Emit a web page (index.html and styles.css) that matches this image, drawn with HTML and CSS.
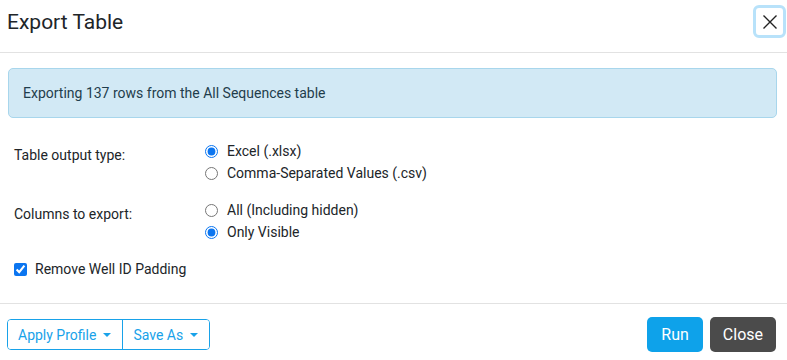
FILE: index.html
```html
<!DOCTYPE html>
<html lang="en">
<head>
  <meta charset="UTF-8">
  <meta name="viewport" content="width=device-width, initial-scale=1.0">
  <title>Export Table</title>
  <link rel="stylesheet" href="styles.css">
</head>
<body>
  <div class="modal">
    <div class="modal-header">
      <h1>Export Table</h1>
      <button class="close-btn" type="button" aria-label="Close">
        <svg width="16" height="16" viewBox="0 0 16 16"><path d="M1.5 1.5 L14.5 14.5 M14.5 1.5 L1.5 14.5" stroke="#222" stroke-width="1.4" fill="none"/></svg>
      </button>
    </div>
    <div class="modal-body">
      <div class="alert">Exporting 137 rows from the All Sequences table</div>
      <form class="export-form">
        <div class="form-row">
          <div class="row-label">Table output type:</div>
          <div class="options">
            <label class="option"><input type="radio" name="type" checked> Excel (.xlsx)</label>
            <label class="option"><input type="radio" name="type"> Comma-Separated Values (.csv)</label>
          </div>
        </div>
        <div class="form-row">
          <div class="row-label">Columns to export:</div>
          <div class="options">
            <label class="option"><input type="radio" name="cols"> All (Including hidden)</label>
            <label class="option"><input type="radio" name="cols" checked> Only Visible</label>
          </div>
        </div>
        <label class="check"><input type="checkbox" checked> Remove Well ID Padding</label>
      </form>
    </div>
    <div class="modal-footer">
      <div class="btn-group">
        <button type="button" class="btn-outline">Apply Profile <span class="caret"></span></button>
        <button type="button" class="btn-outline">Save As <span class="caret"></span></button>
      </div>
      <div class="actions">
        <button type="button" class="btn btn-run">Run</button>
        <button type="button" class="btn btn-close">Close</button>
      </div>
    </div>
  </div>
</body>
</html>
```

FILE: styles.css
```css
body {
  margin: 0;
  font-family: Roboto, "Liberation Sans", sans-serif;
  color: #212529;
  background: #fff;
}
.modal {
  width: 787px;
  height: 360px;
  overflow: hidden;
}
.modal-header {
  display: flex;
  align-items: flex-start;
  justify-content: space-between;
  box-sizing: border-box;
  height: 53px;
  padding: 0 1px 0 7px;
  border-bottom: 1px solid #e2e2e2;
}
.modal-header h1 {
  margin: 8px 0 0 0;
  font-size: 21px;
  line-height: 28px;
  font-weight: 400;
  color: #212529;
}
.close-btn {
  width: 33px;
  height: 33px;
  margin-top: 5px;
  display: flex;
  align-items: center;
  justify-content: center;
  background: #fff;
  border: 3px solid #b8e2fa;
  border-radius: 6px;
  padding: 0;
}
.modal-body {
  padding: 15px 10px 0 8px;
}
.alert {
  background: #d2e9f5;
  border: 1px solid #a8d6ec;
  border-radius: 5px;
  color: #1f3d4c;
  font-size: 14px;
  line-height: 18px;
  padding: 15px 14px 15px 14px;
}
.export-form {
  padding: 24px 6px 0 6px;
  font-size: 14px;
}
.form-row {
  display: flex;
  margin-bottom: 19px;
}
.row-label {
  width: 191px;
  padding-top: 5px;
}
.options {
  display: flex;
  flex-direction: column;
  gap: 4px;
}
.option, .check {
  display: flex;
  align-items: center;
  height: 18px;
}
.option input {
  width: 13px;
  height: 13px;
  margin: 0 9px 0 0;
  accent-color: #0b75f0;
}
.check {
  margin-top: 7px;
}
.check input {
  width: 13px;
  height: 13px;
  margin: 0 8px 0 0;
  accent-color: #0b75f0;
}
.modal-footer {
  display: flex;
  align-items: center;
  justify-content: space-between;
  margin-top: 25px;
  border-top: 1px solid #e2e2e2;
  padding: 13px 11px 0 7px;
}
.btn-group {
  display: flex;
  border: 1px solid #18a2e9;
  border-radius: 4px;
  overflow: hidden;
}
.btn-outline {
  font-family: inherit;
  font-size: 14px;
  color: #18a2e9;
  background: #fff;
  border: none;
  height: 29px;
  padding: 0 11px 0 10px;
  display: flex;
  align-items: center;
  gap: 7px;
}
.btn-outline + .btn-outline {
  border-left: 1px solid #18a2e9;
}
.caret {
  width: 0;
  height: 0;
  border-left: 4px solid transparent;
  border-right: 4px solid transparent;
  border-top: 4px solid #18a2e9;
}
.actions {
  display: flex;
  gap: 7px;
}
.btn {
  font-family: inherit;
  font-size: 16px;
  height: 35px;
  border: none;
  border-radius: 5px;
  color: #fff;
  padding: 0 14px;
}
.btn-run {
  background: #0ea2ea;
}
.btn-close {
  background: #4b4b4b;
  padding: 0 13px;
}
```
